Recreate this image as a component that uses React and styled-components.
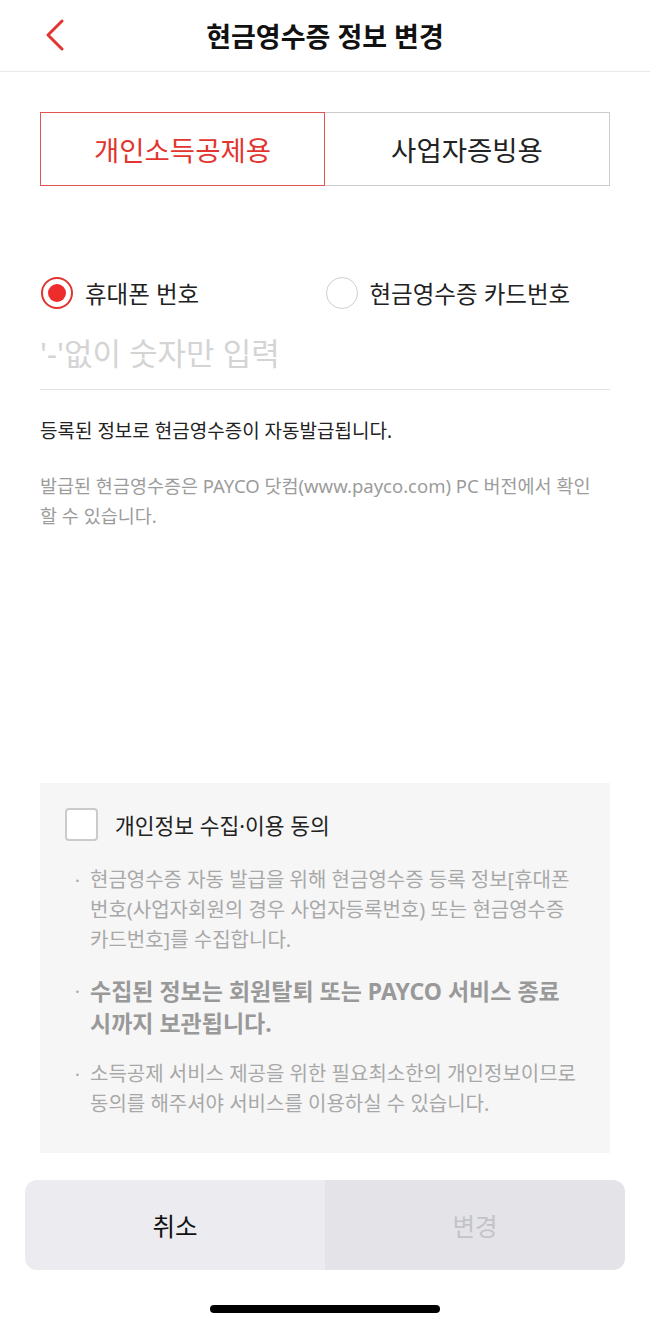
import React from "react";
import styled, { createGlobalStyle } from "styled-components";

const Global = createGlobalStyle`
  html, body { margin: 0; padding: 0; background: #fff; }
  body {
    font-family: "Noto Sans", "Noto Sans CJK KR", sans-serif;
    word-break: keep-all;
    -webkit-font-smoothing: antialiased;
  }
  * { box-sizing: border-box; }
`;

const Page = styled.div`
  width: 650px;
  min-height: 1327px;
  display: flex;
  flex-direction: column;
  background: #fff;
`;

const Header = styled.header`
  height: 72px;
  border-bottom: 1px solid #e9e9e9;
  display: grid;
  grid-template-columns: 1fr auto 1fr;
  align-items: center;
`;

const BackButton = styled.button`
  justify-self: start;
  margin-left: 45px;
  padding: 0;
  border: 0;
  background: none;
  display: flex;
  width: 20px;
  height: 32px;
  margin-top: -2px;
`;

const Title = styled.h1`
  margin: 0;
  font-size: 27px;
  font-weight: 700;
  color: #111;
  letter-spacing: 0;
`;

const Content = styled.main`
  padding: 0 40px;
  display: flex;
  flex-direction: column;
`;

const Tabs = styled.div`
  margin-top: 40px;
  display: grid;
  grid-template-columns: 1fr 1fr;
  height: 74px;
`;

const Tab = styled.button`
  font-family: inherit;
  font-size: 27.5px;
  font-weight: 400;
  background: #fff;
  padding: 0;
  color: ${(p) => (p.$active ? "#e2352f" : "#222")};
  border: 1px solid ${(p) => (p.$active ? "#e2544f" : "#cccccc")};
  ${(p) => (!p.$active ? "border-left: none;" : "")}
`;

const RadioGroup = styled.div`
  margin-top: 90px;
  display: grid;
  grid-template-columns: 1fr 1fr;
  padding-left: 1px;
`;

const RadioItem = styled.label`
  display: flex;
  align-items: center;
  gap: 12px;
  font-size: 23.5px;
  color: #222;
`;

const RadioCircle = styled.span`
  width: 32px;
  height: 32px;
  border-radius: 50%;
  border: ${(p) => (p.$checked ? "2px solid #e2352f" : "1.5px solid #cfcfcf")};
  display: flex;
  align-items: center;
  justify-content: center;
  background: #fff;
  &::after {
    content: "";
    display: ${(p) => (p.$checked ? "block" : "none")};
    width: 18px;
    height: 18px;
    border-radius: 50%;
    background: #ee2c2c;
  }
`;

const NumberInput = styled.input`
  margin-top: 14px;
  height: 66px;
  padding: 0 0 8px;
  border: 0;
  border-bottom: 1px solid #e2e2e2;
  outline: none;
  font-family: inherit;
  font-size: 31px;
  color: #222;
  background: transparent;
  &::placeholder { color: #d4d4d4; }
`;

const Notice = styled.p`
  margin: 28px 0 0;
  font-size: 19px;
  line-height: 26px;
  color: #222;
`;

const SubNotice = styled.p`
  margin: 27px 0 0;
  font-size: 18.5px;
  line-height: 30px;
  color: #9c9c9c;
`;

const Spacer = styled.div`
  flex: 1;
`;

const ConsentBox = styled.section`
  margin: 0 40px;
  background: #f6f6f6;
  padding: 25px 24px 34px 25px;
`;

const CheckRow = styled.label`
  display: flex;
  align-items: center;
  gap: 17px;
  font-size: 21.5px;
  color: #222;
`;

const CheckBox = styled.span`
  width: 33px;
  height: 33px;
  border: 2px solid #cbcbcb;
  border-radius: 4px;
  background: #fff;
`;

const List = styled.ul`
  list-style: none;
  margin: 24px 0 0;
  padding: 0;
  display: flex;
  flex-direction: column;
  gap: 20px;
`;

const Item = styled.li`
  display: flex;
  font-size: ${(p) => (p.$strong ? "23px" : "20px")};
  font-weight: ${(p) => (p.$strong ? 700 : 400)};
  line-height: ${(p) => (p.$strong ? "32px" : "30px")};
  color: ${(p) => (p.$strong ? "#999999" : "#a8a8a8")};
  &::before {
    content: "·";
    flex: 0 0 25px;
    text-align: center;
    font-weight: 400;
    font-size: 18px;
    color: #a8a8a8;
  }
`;

const ButtonBar = styled.div`
  margin: 27px 25px 0;
  height: 90px;
  border-radius: 12px;
  overflow: hidden;
  display: grid;
  grid-template-columns: 1fr 1fr;
`;

const ActionButton = styled.button`
  border: 0;
  padding: 0;
  font-family: inherit;
  font-size: 24.5px;
  background: ${(p) => (p.$disabled ? "#e3e3e8" : "#ebebf0")};
  color: ${(p) => (p.$disabled ? "#c3c3c7" : "#111")};
`;

const HomeIndicator = styled.div`
  width: 230px;
  height: 8px;
  border-radius: 4px;
  background: #000;
  margin: 35px auto 14px;
`;

export default function App() {
  return (
    <Page>
      <Global />
      <Header>
        <BackButton aria-label="뒤로">
          <svg width="20" height="32" viewBox="0 0 20 32">
            <path d="M17 2 L3 16 L17 30" fill="none" stroke="#e2352f" strokeWidth="3" strokeLinecap="round" strokeLinejoin="round" />
          </svg>
        </BackButton>
        <Title>현금영수증 정보 변경</Title>
        <span />
      </Header>
      <Content>
        <Tabs>
          <Tab $active>개인소득공제용</Tab>
          <Tab>사업자증빙용</Tab>
        </Tabs>
        <RadioGroup>
          <RadioItem>
            <RadioCircle $checked />
            휴대폰 번호
          </RadioItem>
          <RadioItem>
            <RadioCircle />
            현금영수증 카드번호
          </RadioItem>
        </RadioGroup>
        <NumberInput placeholder="'-'없이 숫자만 입력" />
        <Notice>등록된 정보로 현금영수증이 자동발급됩니다.</Notice>
        <SubNotice>발급된 현금영수증은 PAYCO 닷컴(www.payco.com) PC 버전에서 확인 할 수 있습니다.</SubNotice>
      </Content>
      <Spacer />
      <ConsentBox>
        <CheckRow>
          <CheckBox />
          개인정보 수집·이용 동의
        </CheckRow>
        <List>
          <Item>현금영수증 자동 발급을 위해 현금영수증 등록 정보[휴대폰 번호(사업자회원의 경우 사업자등록번호) 또는 현금영수증 카드번호]를 수집합니다.</Item>
          <Item $strong>수집된 정보는 회원탈퇴 또는 PAYCO 서비스 종료 시까지 보관됩니다.</Item>
          <Item>소득공제 서비스 제공을 위한 필요최소한의 개인정보이므로 동의를 해주셔야 서비스를 이용하실 수 있습니다.</Item>
        </List>
      </ConsentBox>
      <ButtonBar>
        <ActionButton>취소</ActionButton>
        <ActionButton $disabled>변경</ActionButton>
      </ButtonBar>
      <HomeIndicator />
    </Page>
  );
}
